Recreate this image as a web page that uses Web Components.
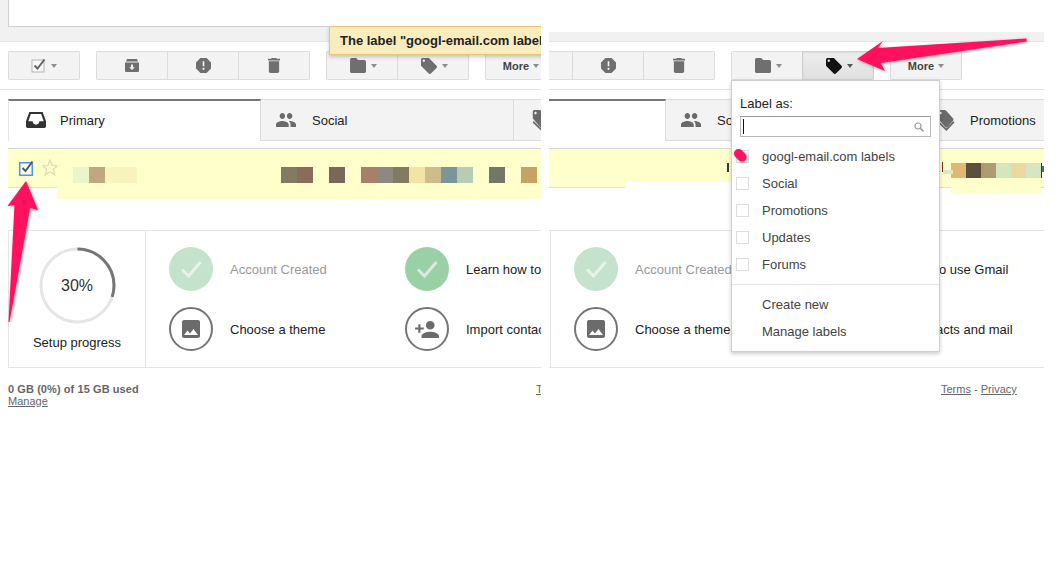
<!DOCTYPE html>
<html>
<head>
<meta charset="utf-8">
<title>Label as</title>
<style>
html, body { margin: 0; background: #fff; }
body { font: 13px "Liberation Sans", Arial, sans-serif; color: #222; }
.page { display: flex; gap: 8px; width: 1063px; height: 579px; overflow: hidden; }
#before { width: 541px; }
#after { width: 495px; --shift: -144px; }
</style>
</head>
<body>
<div class="page">
  <mail-pane id="before" compose>
    <toast-note slot="overlay">The label "googl-email.com labels"</toast-note>
    <row-seg slot="row" w="49" h="38" line><row-controls></row-controls></row-seg>
    <row-seg slot="row" w="1000" h="50">
      <pixel-strip left="16" top="18" size="16" colors="eaf5c9 bfa77f f9f3c0 f8f2bc - - - - - - - - - 827a62 8a6c5b - 7a6759 - a97f6a 8e8880 827a62 f2e4a4 cfbc8c 7b969a b7ccb4 - 72776a - c6a266"></pixel-strip>
    </row-seg>
  </mail-pane>

  <mail-pane id="after" labeling>
    <label-menu slot="overlay"></label-menu>
    <row-seg slot="row" w="212" h="38" line></row-seg>
    <row-seg slot="row" w="315" h="33">
      <row-mark x="102" y="14" w="2" h="9" color="#2b3a4a"></row-mark>
    </row-seg>
    <row-seg slot="row" w="11" h="38" line>
      <row-mark x="2" y="13" w="1" h="10" color="#7a2a20"></row-mark>
      <row-mark x="3" y="21" w="8" h="4" color="#dce9c4"></row-mark>
    </row-seg>
    <row-seg slot="row" w="90" h="44">
      <pixel-strip left="0" top="14" size="15" colors="e0b873 5b503e b09b70 d5e6bf ecd9a0 d5e6c0"></pixel-strip>
      <row-mark x="-3" y="21" w="5" h="4" color="#dce9c4"></row-mark>
    </row-seg>
    <row-seg slot="row" w="464" h="38" line>
      <row-mark x="0" y="14" w="1" h="15" color="#333"></row-mark>
      <row-mark x="1" y="17" w="2" h="6" color="#4a6f70"></row-mark>
    </row-seg>
  </mail-pane>
</div>
<arrow-overlay></arrow-overlay>

<script>
const TAG = 'M21.41 11.58l-9-9C12.05 2.22 11.55 2 11 2H4c-1.1 0-2 .9-2 2v7c0 .55.22 1.05.59 1.42l9 9c.36.36.86.58 1.41.58.55 0 1.05-.22 1.41-.59l7-7c.37-.36.59-.86.59-1.41 0-.55-.23-1.06-.59-1.42zM5.5 7C4.67 7 4 6.33 4 5.5S4.67 4 5.5 4 7 4.67 7 5.5 6.33 7 5.5 7z';

const ICONS = {
  archive: ['0 0 14 13', '<path fill-rule="evenodd" d="M2 0h10l1 2.5h-12zM0 3.5h14V12a1 1 0 0 1-1 1H1a1 1 0 0 1-1-1zM6 5.5v2.8H4.2L7 11l2.800-2.700H8V5.500z"/>'],
  report: ['3 3 18 18', '<path d="M15.73 3H8.27L3 8.27v7.46L8.27 21h7.46L21 15.73V8.27L15.73 3zM12 17.3c-.72 0-1.3-.58-1.3-1.3 0-.72.58-1.3 1.3-1.3.72 0 1.3.58 1.3 1.3 0 .72-.58 1.3-1.3 1.3zm1-4.3h-2V7h2v6z"/>'],
  trash: ['5 3 14 18', '<path d="M6 19c0 1.1.9 2 2 2h8c1.1 0 2-.9 2-2V7H6v12zM19 4h-3.500l-1-1h-5l-1 1H5v2h14V4z"/>'],
  folder: ['2 4 20 16', '<path d="M10 4H4c-1.100 0-2 .9-2 2v12c0 1.100.9 2 2 2h16c1.100 0 2-.9 2-2V8c0-1.100-.9-2-2-2h-8l-2-2z"/>'],
  tag: ['2 2 20 20', `<path d="${TAG}"/>`],
  inbox: ['0 0 24 19', '<path fill-rule="evenodd" d="M4 0h16l4 11v6a2 2 0 0 1-2 2H2a2 2 0 0 1-2-2v-6zM5.800 2.500 2.800 11H8c0 2.200 1.800 4 4 4s4-1.800 4-4h5.200l-3-8.500z"/>'],
  people: ['1 5 22 14', '<path d="M16 11c1.660 0 2.990-1.340 2.990-3S17.660 5 16 5c-1.660 0-3 1.340-3 3s1.340 3 3 3zm-8 0c1.660 0 2.990-1.340 2.990-3S9.660 5 8 5C6.340 5 5 6.340 5 8s1.340 3 3 3zm0 2c-2.330 0-7 1.170-7 3.500V19h14v-2.500c0-2.330-4.670-3.500-7-3.500zm8 0c-.29 0-.62.02-.97.05 1.160.84 1.970 1.970 1.970 3.450V19h6v-2.500c0-2.330-4.670-3.500-7-3.500z"/>'],
  promo: ['1 1 23 25', `<path d="${TAG}"/><path d="M2.500 15.500l10.500 9 9.500-9" fill="none" stroke="currentColor" stroke-width="2.200"/>`],
  image: ['3 3 18 18', '<path d="M21 19V5c0-1.100-.9-2-2-2H5c-1.100 0-2 .9-2 2v14c0 1.100.9 2 2 2h14c1.100 0 2-.9 2-2zM8.500 13.500l2.500 3.010L14.500 12l4.500 6H5l3.500-4.500z"/>'],
  personAdd: ['1 4 22 16', '<path d="M15 12c2.210 0 4-1.790 4-4s-1.790-4-4-4-4 1.790-4 4 1.790 4 4 4zm-9-2V7H4v3H1v2h3v3h2v-3h3v-2H6zm9 4c-2.670 0-8 1.340-8 4v2h16v-2c0-2.660-5.330-4-8-4z"/>']
};

function icon(name, w, h) {
  const [box, body] = ICONS[name];
  return `<svg width="${w}" height="${h}" viewBox="${box}" preserveAspectRatio="none" fill="currentColor" style="display:block;flex:none">${body}</svg>`;
}

const CARET = '<i style="display:block;flex:none;border:3.5px solid transparent;border-top:4px solid currentColor;border-bottom:0;color:var(--caret,#8c8c8c)"></i>';

class ToolButton extends HTMLElement {
  constructor() {
    super();
    this.attachShadow({ mode: 'open' });
    this.shadowRoot.innerHTML = `
    <style>
    :host {
      display: flex;
      align-items: center;
      justify-content: center;
      gap: 5px;
      box-sizing: border-box;
      width: 72px;
      height: 29px;
      background: #f3f3f3;
      border: 1px solid #dcdcdc;
      color: #6f6f6f;
      font: bold 11px "Liberation Sans", Arial, sans-serif;
    }
    :host([pressed]) {
      background: linear-gradient(#eeeeee, #e0e0e0);
      border-color: #cfcfcf;
      box-shadow: inset 0 1px 2px rgba(0,0,0,.08);
      color: #111;
      --caret: #555;
    }
    </style>
    <slot></slot>`;
  }
}
customElements.define('tool-button', ToolButton);

class ToolGroup extends HTMLElement {
  constructor() {
    super();
    this.attachShadow({ mode: 'open' });
    this.shadowRoot.innerHTML = `
    <style>
    :host { display: flex; border-radius: 2px; overflow: hidden; }
    ::slotted(tool-button:not(:first-child)) { margin-left: -1px; }
    </style>
    <slot></slot>`;
  }
}
customElements.define('tool-group', ToolGroup);

class MailToolbar extends HTMLElement {
  constructor() {
    super();
    this.attachShadow({ mode: 'open' });
  }

  connectedCallback() {
    const pressed = this.hasAttribute('labeling') ? 'pressed' : '';
    this.shadowRoot.innerHTML = `
    <style>
    :host {
      display: flex;
      gap: 16px;
      box-sizing: border-box;
      height: 48px;
      padding: 9px 0 9px 8px;
      border-bottom: 1px solid #e5e5e5;
    }
    .shift { padding-left: 3px; }
    .more { color: #444; gap: 4px; }
    .check { display: block; flex: none; }
    </style>
    <tool-group>
      <tool-button>
        <svg class="check" width="15" height="15" viewBox="0 0 15 15">
          <rect x="1" y="2" width="12" height="12" fill="#f8f8f8" stroke="#b5b5b5"/>
          <path d="M3.500 7.500 6.500 10.500 13.500 1.500" fill="none" stroke="#666" stroke-width="2"/>
        </svg>${CARET}
      </tool-button>
    </tool-group>
    <tool-group>
      <tool-button>${icon('archive', 14, 13)}</tool-button>
      <tool-button>${icon('report', 15, 15)}</tool-button>
      <tool-button>${icon('trash', 12, 15)}</tool-button>
    </tool-group>
    <tool-group>
      <tool-button><span class="shift">${icon('folder', 16, 15)}</span>${CARET}</tool-button>
      <tool-button ${pressed}><span class="shift">${icon('tag', 16, 16)}</span>${CARET}</tool-button>
    </tool-group>
    <tool-group>
      <tool-button class="more">More${CARET}</tool-button>
    </tool-group>`;
  }
}
customElements.define('mail-toolbar', MailToolbar);

class InboxTabs extends HTMLElement {
  constructor() {
    super();
    this.attachShadow({ mode: 'open' });
    this.shadowRoot.innerHTML = `
    <style>
    :host {
      display: flex;
      margin: 9px 0 0 8px;
      height: 42px;
      color: #222;
      font-size: 13px;
    }
    .tab {
      display: flex;
      align-items: center;
      box-sizing: border-box;
      width: 253px;
      padding-left: 15px;
      background: #f3f3f3;
      border: 1px solid #dcdcdc;
      border-left: 0;
    }
    .tab .cell { width: 36px; color: #6a6a6a; }
    .on {
      background: #fff;
      border: 0;
      border-top: 2px solid #757575;
      border-left: 1px solid #e5e5e5;
      border-right: 1px solid #dcdcdc;
      padding-left: 17px;
      padding-bottom: 2px;
    }
    .on .cell { width: 34px; color: #333; }
    .promo { padding-left: 3px; }
    </style>
    <div class="tab on"><span class="cell">${icon('inbox', 20, 16)}</span>Primary</div>
    <div class="tab"><span class="cell">${icon('people', 20, 14)}</span>Social</div>
    <div class="tab"><span class="cell"><span class="promo" style="display:block">${icon('promo', 18, 22)}</span></span>Promotions</div>`;
  }
}
customElements.define('inbox-tabs', InboxTabs);

class RowSeg extends HTMLElement {
  constructor() {
    super();
    this.attachShadow({ mode: 'open' });
    this.shadowRoot.innerHTML = `
    <style>
    :host {
      display: block;
      position: relative;
      flex: none;
      background: #ffffcc;
    }
    :host([line]) { border-bottom: 1px solid #dddddd; }
    </style>
    <slot></slot>`;
  }

  connectedCallback() {
    this.style.width = this.getAttribute('w') + 'px';
    this.style.height = this.getAttribute('h') + 'px';
  }
}
customElements.define('row-seg', RowSeg);

class RowMark extends HTMLElement {
  constructor() {
    super();
    this.attachShadow({ mode: 'open' });
    this.shadowRoot.innerHTML = '<style>:host { display: block; position: absolute; }</style>';
  }

  connectedCallback() {
    this.style.left = this.getAttribute('x') + 'px';
    this.style.top = this.getAttribute('y') + 'px';
    this.style.width = this.getAttribute('w') + 'px';
    this.style.height = this.getAttribute('h') + 'px';
    this.style.background = this.getAttribute('color');
  }
}
customElements.define('row-mark', RowMark);

class PixelStrip extends HTMLElement {
  constructor() {
    super();
    this.attachShadow({ mode: 'open' });
  }

  connectedCallback() {
    const size = this.getAttribute('size');
    const blocks = this.getAttribute('colors').split(' ').map(c =>
      `<span style="width:${size}px;height:${size}px;flex:none;background:${c === '-' ? 'transparent' : '#' + c}"></span>`
    ).join('');
    this.shadowRoot.innerHTML = `<style>:host { display: flex; }</style>${blocks}`;
    this.style.paddingLeft = this.getAttribute('left') + 'px';
    this.style.paddingTop = this.getAttribute('top') + 'px';
  }
}
customElements.define('pixel-strip', PixelStrip);

class RowControls extends HTMLElement {
  constructor() {
    super();
    this.attachShadow({ mode: 'open' });
    this.shadowRoot.innerHTML = `
    <style>
    :host { display: flex; padding: 10px 0 0 11px; gap: 8px; }
    svg { display: block; flex: none; }
    </style>
    <svg width="15" height="17" viewBox="0 0 15 17">
      <rect x=".75" y="3.750" width="12.500" height="12.500" fill="#fffff0" stroke="#4d90fe" stroke-width="1.500"/>
      <path d="M3.500 9 6.500 12 13.500 2.500" fill="none" stroke="#555" stroke-width="2"/>
    </svg>
    <svg width="16" height="17" viewBox="0 0 16 17">
      <path d="M8 1 10 6.500 15.500 6.800 11.200 10.300 12.700 15.800 8 12.700 3.300 15.800 4.800 10.300 .5 6.800 6 6.500z" fill="none" stroke="#dcdcb4" stroke-width="1.200"/>
    </svg>`;
  }
}
customElements.define('row-controls', RowControls);

class SetupStep extends HTMLElement {
  constructor() {
    super();
    this.attachShadow({ mode: 'open' });
  }

  connectedCallback() {
    const name = this.getAttribute('icon');
    const inner = name
      ? icon(name, name === 'image' ? 18 : 24, name === 'image' ? 18 : 17)
      : '<svg width="24" height="20" viewBox="0 0 24 20" style="display:block"><path d="M3 10.500 9.500 17 21.500 3" fill="none" stroke="currentColor" stroke-width="3"/></svg>';
    this.shadowRoot.innerHTML = `
    <style>
    :host { display: flex; align-items: center; gap: 17px; white-space: nowrap; font-size: 13px; color: #222; }
    .dot {
      display: flex;
      align-items: center;
      justify-content: center;
      box-sizing: border-box;
      width: 44px;
      height: 44px;
      border-radius: 50%;
      flex: none;
      border: 2px solid #757575;
      color: #6b6b6b;
    }
    :host([state="faded"]) { color: #999; }
    :host([state="faded"]) .dot { background: #c5e2cc; border: 0; color: #e6f3e9; }
    :host([state="done"]) .dot { background: #9ad0a6; border: 0; color: #d8ecdd; }
    </style>
    <span class="dot">${inner}</span><slot></slot>`;
  }
}
customElements.define('setup-step', SetupStep);

class SetupCard extends HTMLElement {
  constructor() {
    super();
    this.attachShadow({ mode: 'open' });
    this.shadowRoot.innerHTML = `
    <style>
    :host {
      display: flex;
      margin-left: 8px;
      height: 136px;
      border: 1px solid #e5e5e5;
      border-right: 0;
      color: #222;
    }
    .progress {
      box-sizing: border-box;
      width: 137px;
      flex: none;
      border-right: 1px solid #e5e5e5;
      padding-top: 16px;
      text-align: center;
    }
    .ring { display: grid; place-items: center; height: 77px; }
    .ring > * { grid-area: 1 / 1; }
    .ring svg { display: block; }
    .pct { font-size: 16px; color: #333; }
    .cap { margin-top: 11px; line-height: 15px; }
    .steps {
      display: grid;
      grid-template-columns: 236px 236px;
      grid-auto-rows: 44px;
      row-gap: 16px;
      padding: 16px 0 0 23px;
    }
    </style>
    <div class="progress">
      <div class="ring">
        <svg width="77" height="77" viewBox="0 0 77 77">
          <circle cx="38.500" cy="38.500" r="36.500" fill="none" stroke="#e5e5e5" stroke-width="3"/>
          <circle cx="38.500" cy="38.500" r="36.500" fill="none" stroke="#757575" stroke-width="3" stroke-dasharray="68.800 160.500" transform="rotate(-90 38.500 38.500)"/>
        </svg>
        <span class="pct">30%</span>
      </div>
      <div class="cap">Setup progress</div>
    </div>
    <div class="steps">
      <setup-step state="faded">Account Created</setup-step>
      <setup-step state="done">Learn how to use Gmail</setup-step>
      <setup-step icon="image">Choose a theme</setup-step>
      <setup-step icon="personAdd">Import contacts and mail</setup-step>
    </div>`;
  }
}
customElements.define('setup-card', SetupCard);

class MailFooter extends HTMLElement {
  constructor() {
    super();
    this.attachShadow({ mode: 'open' });
    this.shadowRoot.innerHTML = `
    <style>
    :host {
      display: flex;
      padding: 15px 0 0 8px;
      font: 11px/12px "Liberation Sans", Arial, sans-serif;
      color: #666;
    }
    .used { width: 528px; flex: none; }
    b { display: block; letter-spacing: .08px; }
    u { cursor: pointer; }
    </style>
    <div class="used"><b>0 GB (0%) of 15 GB used</b><u>Manage</u></div>
    <div><u>Terms</u> - <u>Privacy</u></div>`;
  }
}
customElements.define('mail-footer', MailFooter);

class ToastNote extends HTMLElement {
  constructor() {
    super();
    this.attachShadow({ mode: 'open' });
    this.shadowRoot.innerHTML = `
    <style>
    :host {
      position: absolute;
      left: 329px;
      top: 26px;
      box-sizing: border-box;
      width: 400px;
      height: 29px;
      padding-left: 10px;
      white-space: nowrap;
      font: bold 13px/27px "Liberation Sans", Arial, sans-serif;
      color: #222;
      background: #f9edbe;
      border: 1px solid #f0c36d;
      box-shadow: 0 2px 4px rgba(0,0,0,.2);
    }
    </style>
    <slot></slot>`;
  }
}
customElements.define('toast-note', ToastNote);

class LabelMenu extends HTMLElement {
  constructor() {
    super();
    this.attachShadow({ mode: 'open' });
    const item = (text, box = true) =>
      `<div class="item">${box ? '<i class="box"></i>' : ''}<span>${text}</span></div>`;
    this.shadowRoot.innerHTML = `
    <style>
    :host {
      position: absolute;
      left: 326px;
      top: 80px;
      box-sizing: border-box;
      width: 209px;
      height: 272px;
      background: #fff;
      border: 1px solid #cfcfcf;
      box-shadow: 0 2px 4px rgba(0,0,0,.2);
      color: #444;
      font: 13px "Liberation Sans", Arial, sans-serif;
    }
    .title { padding: 15px 0 0 8px; line-height: 15px; color: #222; }
    .search {
      display: flex;
      align-items: center;
      justify-content: space-between;
      box-sizing: border-box;
      width: 191px;
      height: 21px;
      margin: 5px 0 6px 8px;
      padding: 0 6px 0 2px;
      border: 1px solid #b9b9b9;
      border-top-color: #9a9a9a;
    }
    .caret { width: 1px; height: 15px; background: #111; }
    .item {
      position: relative;
      height: 27px;
      line-height: 27px;
      padding-left: 30px;
    }
    .box {
      position: absolute;
      left: 4px;
      top: 7px;
      box-sizing: border-box;
      width: 13px;
      height: 13px;
      border: 1px solid #dddddd;
    }
    hr { border: 0; border-top: 1px solid #e5e5e5; margin: 6px 0; }
    </style>
    <div class="title">Label as:</div>
    <div class="search">
      <span class="caret"></span>
      <svg width="10" height="10" viewBox="0 0 10 10"><circle cx="4" cy="4" r="3" fill="none" stroke="#999" stroke-width="1.200"/><path d="M6.200 6.200 9.500 9.500" stroke="#999" stroke-width="1.600"/></svg>
    </div>
    ${item('googl-email.com labels')}
    ${item('Social')}
    ${item('Promotions')}
    ${item('Updates')}
    ${item('Forums')}
    <hr>
    ${item('Create new', false)}
    ${item('Manage labels', false)}`;
  }
}
customElements.define('label-menu', LabelMenu);

class MailPane extends HTMLElement {
  constructor() {
    super();
    this.attachShadow({ mode: 'open' });
  }

  connectedCallback() {
    const labeling = this.hasAttribute('labeling') ? 'labeling' : '';
    this.shadowRoot.innerHTML = `
    <style>
    :host { display: block; flex: none; height: 420px; overflow: hidden; }
    .inner { position: relative; width: 1100px; margin-left: var(--shift, 0); }
    .band {
      box-sizing: border-box;
      height: 42px;
      padding-top: 32px;
      background: linear-gradient(#fff 32px, #f1f1f1 32px);
      border-bottom: 1px solid #e5e5e5;
    }
    :host([compose]) .band { background: #f1f1f1; padding: 0 0 0 8px; }
    .compose { display: none; }
    :host([compose]) .compose {
      display: block;
      box-sizing: border-box;
      height: 27px;
      background: #fff;
      border-left: 1px solid #cfcfcf;
      border-bottom: 1px solid #cfcfcf;
    }
    .row {
      display: flex;
      align-items: flex-start;
      box-sizing: border-box;
      height: 82px;
      margin: 7px 0 0 8px;
      border-top: 1px solid #d8d8d8;
    }
    </style>
    <div class="inner">
      <div class="band"><div class="compose"></div></div>
      <mail-toolbar ${labeling}></mail-toolbar>
      <inbox-tabs></inbox-tabs>
      <div class="row"><slot name="row"></slot></div>
      <setup-card></setup-card>
      <mail-footer></mail-footer>
      <slot name="overlay"></slot>
    </div>`;
  }
}
customElements.define('mail-pane', MailPane);

class ArrowOverlay extends HTMLElement {
  constructor() {
    super();
    this.attachShadow({ mode: 'open' });
    this.shadowRoot.innerHTML = `
    <style>
    :host { position: absolute; left: 0; top: 0; width: 1063px; height: 579px; pointer-events: none; }
    svg { display: block; filter: drop-shadow(1px 1px 1.500px rgba(0,0,0,.4)); }
    </style>
    <svg width="1063" height="579" viewBox="0 0 1063 579">
      <path d="M26 181 38 210 30 208 9.500 322 8.500 322 14.500 205 7.500 206z" fill="#ff1160"/>
      <path d="M857 59 883 41 878 48 1026.500 38.500 1026.500 41.500 880.500 63 885 71z" fill="#ff1160"/>
      <path d="M738.500 153.500 742 157" stroke="#ff1160" stroke-width="9" stroke-linecap="round"/>
    </svg>`;
  }
}
customElements.define('arrow-overlay', ArrowOverlay);
</script>
</body>
</html>
